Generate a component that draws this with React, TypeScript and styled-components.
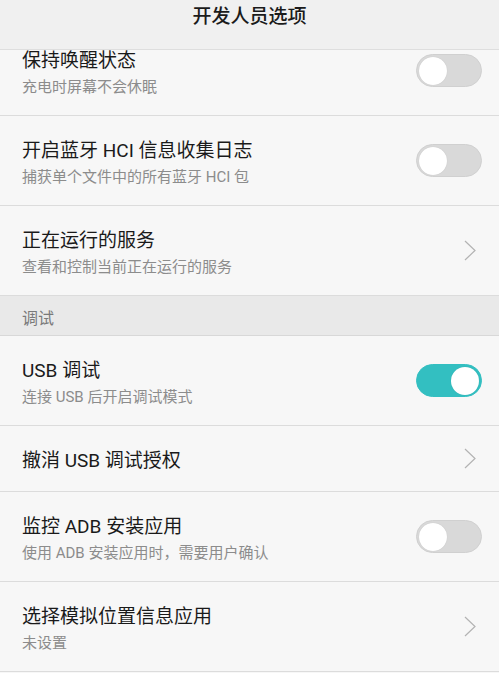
import React from "react";
import styled, { createGlobalStyle } from "styled-components";

const GlobalStyle = createGlobalStyle`
  html, body {
    margin: 0;
    padding: 0;
    background: #f7f7f7;
  }
  body {
    font-family: Roboto, "Noto Sans CJK SC", "Noto Sans", sans-serif;
    -webkit-font-smoothing: antialiased;
  }
`;

const Screen = styled.div`
  width: 499px;
  height: 673px;
  display: flex;
  flex-direction: column;
  background: #f7f7f7;
  overflow: hidden;
`;

const Header = styled.header`
  flex: none;
  height: 50px;
  box-sizing: border-box;
  border-bottom: 1px solid #dedede;
  background: #f0f0f0;
  display: flex;
  justify-content: center;
  align-items: flex-start;
  padding-top: 4px;
  position: relative;
  z-index: 1;
`;

const Title = styled.h1`
  margin: 0;
  font-size: 19px;
  line-height: 26px;
  font-weight: 500;
  color: #1b1b1b;
`;

const Viewport = styled.div`
  flex: 1;
  overflow: hidden;
`;

const List = styled.div<{ $scroll: number }>`
  display: flex;
  flex-direction: column;
  margin-top: ${(p) => -p.$scroll}px;
`;

const Row = styled.div<{ $tall: boolean }>`
  height: ${(p) => (p.$tall ? 90 : 66)}px;
  box-sizing: border-box;
  border-bottom: 1px solid #dcdcdc;
  display: flex;
  align-items: center;
  padding: 0 17px 0 22px;
`;

const Texts = styled.div`
  flex: 1;
  display: flex;
  flex-direction: column;
  gap: 3px;
  padding-top: 5px;
`;

const ItemTitle = styled.div`
  font-size: 19px;
  line-height: 26px;
  color: #1a1a1a;
`;

const ItemSub = styled.div`
  font-size: 15px;
  line-height: 21px;
  color: #8c8c8c;
`;

const Section = styled.div`
  height: 40px;
  box-sizing: border-box;
  border-bottom: 1px solid #d8d8d8;
  background: #e9e9e9;
  display: flex;
  align-items: center;
  padding: 2px 22px 0;
  font-size: 16px;
  color: #7a7a7a;
`;

const Track = styled.div<{ $on: boolean }>`
  width: 66px;
  height: 33px;
  box-sizing: border-box;
  border-radius: 17px;
  background: ${(p) => (p.$on ? "#33bfc1" : "#d9d9d9")};
  border: 1px solid ${(p) => (p.$on ? "#33bfc1" : "#d0d0d0")};
  display: flex;
  align-items: center;
  justify-content: ${(p) => (p.$on ? "flex-end" : "flex-start")};
  padding: 0 2px;
`;

const Knob = styled.div`
  width: 28px;
  height: 28px;
  border-radius: 50%;
  background: #ffffff;
  box-shadow: 0 0 1px rgba(0, 0, 0, 0.15);
`;

const ChevronBox = styled.div`
  width: 66px;
  display: flex;
  justify-content: flex-end;
  padding-right: 6px;
  box-sizing: border-box;
`;

const Chevron = () => (
  <ChevronBox>
    <svg width="12" height="21" viewBox="0 0 12 21">
      <path d="M1 1 L11 10.5 L1 20" fill="none" stroke="#b3b3b3" strokeWidth="1.2" />
    </svg>
  </ChevronBox>
);

const Toggle = ({ on }: { on: boolean }) => (
  <Track $on={on}>
    <Knob />
  </Track>
);

type Item =
  | { kind: "item"; title: string; sub?: string; ctrl: "on" | "off" | "chevron" }
  | { kind: "section"; title: string };

const items: Item[] = [
  { kind: "item", title: "保持唤醒状态", sub: "充电时屏幕不会休眠", ctrl: "off" },
  { kind: "item", title: "开启蓝牙 HCI 信息收集日志", sub: "捕获单个文件中的所有蓝牙 HCI 包", ctrl: "off" },
  { kind: "item", title: "正在运行的服务", sub: "查看和控制当前正在运行的服务", ctrl: "chevron" },
  { kind: "section", title: "调试" },
  { kind: "item", title: "USB 调试", sub: "连接 USB 后开启调试模式", ctrl: "on" },
  { kind: "item", title: "撤消 USB 调试授权", ctrl: "chevron" },
  { kind: "item", title: "监控 ADB 安装应用", sub: "使用 ADB 安装应用时，需要用户确认", ctrl: "off" },
  { kind: "item", title: "选择模拟位置信息应用", sub: "未设置", ctrl: "chevron" },
];

export default function App() {
  return (
    <>
      <GlobalStyle />
      <Screen>
        <Header>
          <Title>开发人员选项</Title>
        </Header>
        <Viewport>
          <List $scroll={24}>
            {items.map((it, i) =>
              it.kind === "section" ? (
                <Section key={i}>{it.title}</Section>
              ) : (
                <Row key={i} $tall={!!it.sub}>
                  <Texts>
                    <ItemTitle>{it.title}</ItemTitle>
                    {it.sub && <ItemSub>{it.sub}</ItemSub>}
                  </Texts>
                  {it.ctrl === "chevron" ? <Chevron /> : <Toggle on={it.ctrl === "on"} />}
                </Row>
              )
            )}
          </List>
        </Viewport>
      </Screen>
    </>
  );
}
